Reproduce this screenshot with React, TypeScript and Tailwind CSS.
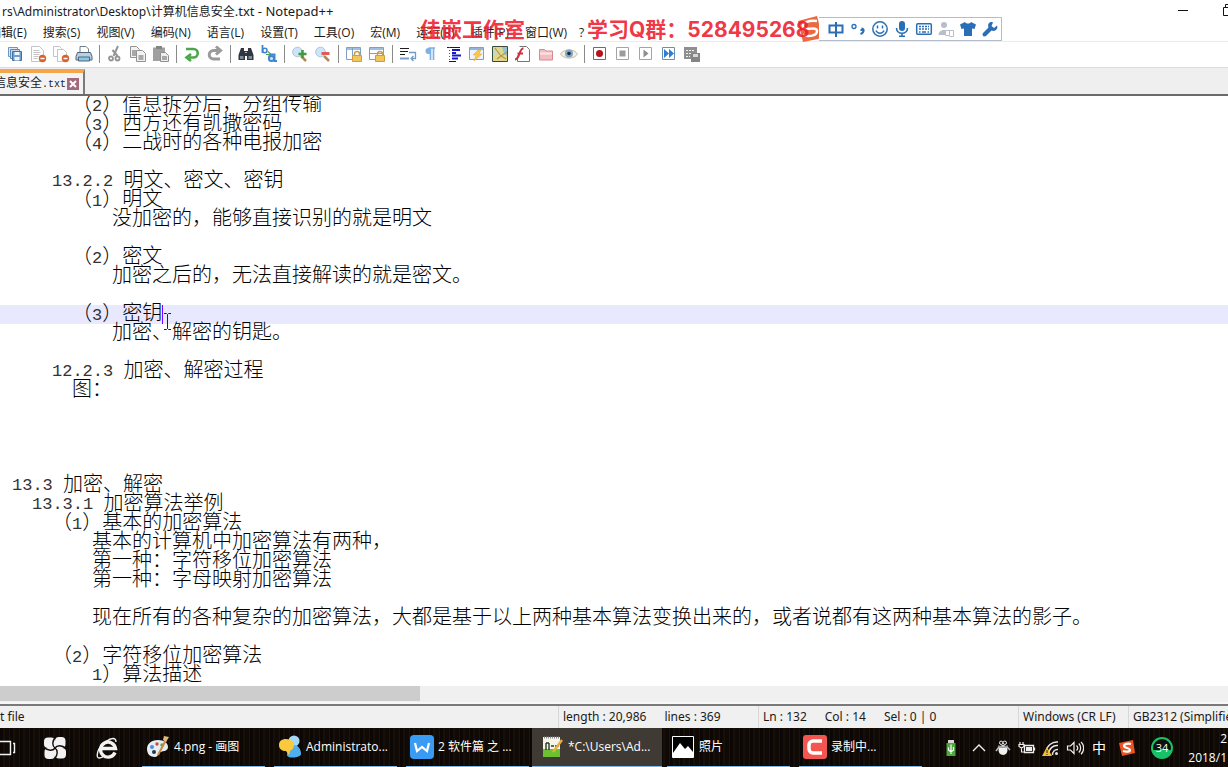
import type { ReactNode } from "react";

const uiFont = "font-['Noto_Sans','Noto_Sans_CJK_SC',sans-serif]";

type IconProps = { children: ReactNode; size?: number; box?: number };

function Icon({ children, size = 18, box = 18 }: Readonly<IconProps>) {
  return (
    <svg
      width={size}
      height={size}
      viewBox={`0 0 ${box} ${box}`}
      fill="none"
      aria-hidden="true"
      className="flex-none"
    >
      {children}
    </svg>
  );
}

/* ---------- toolbar icons ---------- */

const saveAll = (
  <>
    <path d="M2.500 2.500h9v9h-9z" fill="#dce9f5" stroke="#6d97c0" />
    <path d="M4.500 4.500h9v9h-9z" fill="#c3d8ec" stroke="#5b89b7" />
    <path d="M6.500 6.500h9v9h-9z" fill="#6f9fcd" stroke="#3f74a8" />
    <path d="M8.500 7h5v3h-5zM8.500 12h5v3.500h-5z" fill="#f1f6fb" />
  </>
);

const closeDoc = (
  <>
    <path d="M2.500 1.500h8l4 4v11h-12z" fill="#fff" stroke="#c4c4c4" />
    <path d="M4.500 5.500h6M4.500 7.500h7M4.500 9.500h6M4.500 11.500h5M4.500 13.500h4" stroke="#c4c4c4" />
    <circle cx="13.500" cy="13.500" r="3.700" fill="#d9622b" />
    <path d="M11.500 13.500h4" stroke="#fff" strokeWidth="1.500" />
  </>
);

const closeAll = (
  <>
    <path d="M1.500 1.500h6l2 2v8h-8z" fill="#fff" stroke="#c4c4c4" />
    <path d="M5.500 4.500h6l3 3v9h-9z" fill="#fff" stroke="#c4c4c4" />
    <circle cx="13.500" cy="13.500" r="3.700" fill="#d9622b" />
    <path d="M11.500 13.500h4" stroke="#fff" strokeWidth="1.500" />
  </>
);

const printer = (
  <>
    <path d="M5 8V1.500h6l2.500 2.500v4" fill="#fff" stroke="#6e7f90" />
    <path d="M2.500 7.500h13l1.500 4v3.500H1v-3.500z" fill="#b9cfe2" stroke="#4f6478" />
    <path d="M3.500 12h11v4h-11z" fill="#8ec6ea" stroke="#4f6478" />
  </>
);

const cut = (
  <>
    <path d="M12 1 7.500 11M6.500 5l5 6" stroke="#959595" strokeWidth="2" />
    <circle cx="5" cy="13.500" r="2" stroke="#959595" strokeWidth="1.800" />
    <circle cx="11.500" cy="13.500" r="2" stroke="#959595" strokeWidth="1.800" />
  </>
);

const copy = (
  <>
    <path d="M1.500 1.500h6l3 3v8h-9z" fill="#f2f2f2" stroke="#929292" />
    <path d="M3 5h4v6H3z" fill="#a8a8a8" />
    <path d="M7.500 5.500h6l3 3v8h-9z" fill="#f2f2f2" stroke="#929292" />
    <path d="M9.500 10h5v5h-5z" fill="#a8a8a8" />
  </>
);

const paste = (
  <>
    <path d="M1 2.500h12V16H1z" fill="#a0a0a0" />
    <path d="M4 1h6v3H4z" fill="#858585" />
    <path d="M8.500 7.500h5l3 3v6h-8z" fill="#efefef" stroke="#909090" />
    <path d="M10 11h5v4h-5z" fill="#a8a8a8" />
  </>
);

const undo = (
  <path
    d="M3 4h7.500a4 4 0 0 1 0 8.500H6M8 9l-4.500 3.500L8 16"
    stroke="#4aa84a"
    strokeWidth="2.600"
  />
);

const redo = (
  <path
    d="M14 14H7.500a4 4 0 0 1 0-8.500H12M10 1.500l4.500 4-4.500 4"
    stroke="#9a9a9a"
    strokeWidth="3"
  />
);

const find = (
  <>
    <path d="M4 3h3v3h4V3h3l2.500 7v5H10v-4H8v4H1.500v-5z" fill="#31373f" />
    <path d="M3 11h3.500v3H3zM11.500 11H15v3h-3.500z" fill="#7b8b9c" />
    <path d="M8 7.500h2" stroke="#aeb9c4" />
  </>
);

const replace = (
  <>
    <path d="M2.500 0v8" stroke="#3f86d1" strokeWidth="1.800" />
    <circle cx="4.800" cy="5.500" r="2.200" stroke="#3f86d1" strokeWidth="1.600" />
    <path d="M6 9.500h4M8 6.500l3 3-3 2" stroke="#55a055" strokeWidth="1.200" />
    <circle cx="11.500" cy="13.500" r="2.600" fill="#cfe3f7" stroke="#3f86d1" strokeWidth="2" />
    <path d="M10 9.500h4.500V16H17" stroke="#3f86d1" strokeWidth="2" />
  </>
);

const zoomIn = (
  <>
    <path d="m10 11 5 5" stroke="#b08a56" strokeWidth="2.500" />
    <circle cx="6.500" cy="7" r="4.800" fill="#cfe5f7" stroke="#a9c6de" />
    <path d="M11.500 5v8M7.500 9h8" stroke="#3f9a3c" strokeWidth="2.500" />
  </>
);

const zoomOut = (
  <>
    <path d="m10 11 5 5" stroke="#b08a56" strokeWidth="2.500" />
    <circle cx="6.500" cy="7" r="4.800" fill="#cfe5f7" stroke="#a9c6de" />
    <path d="M7.500 8.500h8" stroke="#e2514d" strokeWidth="2.800" />
  </>
);

const lock = (
  <>
    <path d="M9.500 11V9a2.500 2.500 0 0 1 5 0v2" stroke="#c9a04a" strokeWidth="1.500" />
    <path d="M7.500 10.500h9v6h-9z" fill="#f2c65a" stroke="#cf9d3b" />
  </>
);

const syncV = (
  <>
    <path d="M1.500 2.500h14v12h-14z" fill="#fff" stroke="#7f9fc5" />
    <path d="M2 3h13v2H2z" fill="#9ebfe2" />
    <path d="M7.500 3v11" stroke="#7f9fc5" />
    {lock}
  </>
);

const syncH = (
  <>
    <path d="M1.500 2.500h14v12h-14z" fill="#fff" stroke="#7f9fc5" />
    <path d="M2 3h13v2H2z" fill="#9ebfe2" />
    <path d="M2 8.500h13" stroke="#7f9fc5" />
    {lock}
  </>
);

const wrap = (
  <>
    <path d="M1 3.500h9M1 6.500h8M1 9.500h5" stroke="#1d1d1d" />
    <path d="M1 13.500h9" stroke="#7aa0c8" strokeWidth="2" />
    <path d="M10 7.500h6.500v6H13M14.500 11 12 13.500l2.500 2.500" stroke="#6f9cc9" strokeWidth="1.300" />
  </>
);

const pilcrow = (
  <>
    <path d="M8 3H6.500a3 3 0 0 0 0 6H8z" fill="#7fb2e2" />
    <path d="M8.500 2.500V15M11.500 2.500V15M6.500 3H13" stroke="#7fb2e2" strokeWidth="1.700" />
  </>
);

const indentGuide = (
  <>
    <path d="M2 2.500h13M4 16.500h7" stroke="#10107a" />
    <path d="M7 5h8M7 8h4M7 10.500h9M7 13.500h6" stroke="#1818c8" strokeWidth="2" />
    <path d="M4.500 2v14" stroke="#c03030" strokeDasharray="1 2" />
  </>
);

const userLang = (
  <>
    <path d="M1.500 2.500h14v12h-14z" fill="#eef4fb" stroke="#7f9fc5" />
    <path d="M2 3h13v2H2z" fill="#8fb6df" />
    <path d="m10 5-5 5h3l-2 6 8-7h-3l2-4z" fill="#f9c651" stroke="#e2a63c" strokeWidth=".5" />
  </>
);

const docMap = (
  <>
    <path d="M1.500 1.500h15v15h-15z" fill="#e2d68c" stroke="#3c4a3a" />
    <path d="M11 2h5v9l-3-2z" fill="#8fc3d8" />
    <path d="m2 2 5 5-3 4-2-2z" fill="#c3dcc0" />
    <path d="m4 3 6 8 6-4M6 14l4-3 5 3" stroke="#b09a4a" strokeWidth="1.200" />
  </>
);

const funcList = (
  <>
    <path d="M5.500 1.500h7l3 3v12h-12v-6" fill="#fff" stroke="#777" />
    <path d="M9.500 3.500C5 3 6 14.500 1 14.500M3.500 8.500H9" stroke="#cc3340" strokeWidth="2" />
  </>
);

const folderIcon = (
  <>
    <path d="M2.500 4.500h5l1.500 1.500h6.500v9h-13z" fill="#f3bec1" stroke="#d98a90" />
    <path d="M3 8.500h12" stroke="#fbe6e8" strokeWidth="2" />
  </>
);

const eye = (
  <>
    <path d="M.5 9C4 3.500 14 3.500 17.500 9 14 14.500 4 14.500.500 9z" fill="#f6efe2" stroke="#cbbb9c" />
    <circle cx="9" cy="8.500" r="4" fill="#7fa6c8" />
    <circle cx="9" cy="8.500" r="1.800" fill="#1b2b3c" />
  </>
);

const frame = (color: string) => (
  <path d="M2.500 2.500h12v12h-12z" fill="#fff" stroke={color} />
);

const record = (
  <>
    {frame("#6d6d6d")}
    <circle cx="8.500" cy="8.500" r="3.500" fill="#b5121b" />
  </>
);

const stop = (
  <>
    {frame("#a4a4a4")}
    <path d="M5.500 5.500h6v6h-6z" fill="#9b9b9b" />
  </>
);

const play = (
  <>
    {frame("#a4a4a4")}
    <path d="M6.500 4.500v8l5-4z" fill="#8d8d8d" />
  </>
);

const playMany = (
  <>
    {frame("#6f8db0")}
    <path d="M4 4v9l5-4.500zM9 4v9l5-4.500z" fill="#2f7fd0" />
  </>
);

const saveMacro = (
  <>
    <path d="M1 2h13v12H1z" fill="#8f8f8f" />
    <path d="M3 5.500h9M3 8.500h6M3 11.500h4" stroke="#f2f2f2" strokeDasharray="2 1" />
    <path d="M8 8h9v9H8z" fill="#858585" />
    <path d="M10 9h5v3h-5z" fill="#d8d8d8" />
  </>
);

type Tool = { label: string; icon: ReactNode };

const toolGroups: Tool[][] = [
  [
    { label: "全部保存", icon: saveAll },
    { label: "关闭", icon: closeDoc },
    { label: "全部关闭", icon: closeAll },
    { label: "打印", icon: printer },
  ],
  [
    { label: "剪切", icon: cut },
    { label: "复制", icon: copy },
    { label: "粘贴", icon: paste },
  ],
  [
    { label: "撤销", icon: undo },
    { label: "重做", icon: redo },
  ],
  [
    { label: "查找", icon: find },
    { label: "替换", icon: replace },
  ],
  [
    { label: "放大", icon: zoomIn },
    { label: "缩小", icon: zoomOut },
  ],
  [
    { label: "同步垂直滚动", icon: syncV },
    { label: "同步水平滚动", icon: syncH },
  ],
  [
    { label: "自动换行", icon: wrap },
    { label: "显示所有字符", icon: pilcrow },
    { label: "缩进参考线", icon: indentGuide },
    { label: "自定义语言", icon: userLang },
    { label: "文档结构图", icon: docMap },
    { label: "函数列表", icon: funcList },
    { label: "文件夹工作区", icon: folderIcon },
    { label: "监视", icon: eye },
  ],
  [
    { label: "录制宏", icon: record },
    { label: "停止录制", icon: stop },
    { label: "播放", icon: play },
    { label: "重复播放", icon: playMany },
    { label: "保存宏", icon: saveMacro },
  ],
];

function Toolbar() {
  return (
    <div className="flex h-[26px] flex-none items-start border-b border-[#dcdcdc] bg-white pl-[3px]">
      {toolGroups.map((group, index) => (
        <div key={group[0].label} className="flex items-center">
          {index > 0 && (
            <span className="flex w-2 justify-center">
              <span className="h-[18px] w-px bg-[#8a8a8a]" />
            </span>
          )}
          {group.map(({ label, icon }) => (
            <button
              key={label}
              type="button"
              aria-label={label}
              className="flex h-6 w-[23px] items-center justify-center"
            >
              <Icon>{icon}</Icon>
            </button>
          ))}
        </div>
      ))}
    </div>
  );
}

/* ---------- title and menu ---------- */

const menus = [
  "编辑(E)",
  "搜索(S)",
  "视图(V)",
  "编码(N)",
  "语言(L)",
  "设置(T)",
  "工具(O)",
  "宏(M)",
  "运行(R)",
  "插件(P)",
  "窗口(W)",
  "?",
];

function TitleBar() {
  return (
    <header className="flex h-6 flex-none items-center justify-between overflow-hidden">
      <h1 className="pl-0.5 text-xs whitespace-nowrap">
        rs\Administrator\Desktop\计算机信息安全
        <span className="text-[13px]">.txt - Notepad++</span>
      </h1>
      <div className="-mr-[7px] flex gap-[34px] pb-1">
        <button type="button" aria-label="最小化">
          <Icon size={12} box={12}>
            <path d="M1 6.500h10" stroke="#111" />
          </Icon>
        </button>
        <button type="button" aria-label="还原">
          <Icon size={12} box={12}>
            <path d="M.5 3.500h8v8h-8zM2.500 3V.500h9v8H9" stroke="#111" />
          </Icon>
        </button>
      </div>
    </header>
  );
}

function MenuBar() {
  return (
    <nav className="-ml-[19px] flex h-[18px] flex-none items-center border-b border-[#ececec] font-['Open_Sans','Noto_Sans_CJK_SC',sans-serif]">
      {menus.map((menu) => (
        <button
          key={menu}
          type="button"
          className="px-2 text-xs leading-4 whitespace-nowrap last:px-1"
        >
          {menu}
        </button>
      ))}
    </nav>
  );
}

function TabStrip() {
  return (
    <div className="flex h-7 flex-none items-end border-b-2 border-[#6b6b6b] bg-[#efefef]">
      <div className="flex h-[25px] w-[85px] items-center justify-end overflow-hidden border-t-4 border-r-2 border-t-[#f5a54a] border-r-[#7b7b7b] bg-[#f3f3f3] pr-1">
        <span className="font-['Liberation_Mono','Noto_Sans_CJK_SC',monospace] text-xs whitespace-nowrap">
          信息安全<span className="text-[10px]">.txt</span>
        </span>
        <button
          type="button"
          aria-label="关闭标签"
          className="ml-px flex size-3 flex-none items-center justify-center bg-[#a26a7f]"
        >
          <Icon size={8} box={8}>
            <path d="m1 1 6 6M7 1 1 7" stroke="#fff" strokeWidth="2" />
          </Icon>
        </button>
      </div>
    </div>
  );
}

/* ---------- editor ---------- */

type Line = { indent?: string; num?: string; text?: string; current?: boolean };

const lines: Line[] = [
  { indent: "pl-[72px]", text: "（2）信息拆分后，分组传输" },
  { indent: "pl-[72px]", text: "（3）西方还有凯撒密码" },
  { indent: "pl-[72px]", text: "（4）二战时的各种电报加密" },
  {},
  { indent: "pl-[52px]", num: "13.2.2 ", text: "明文、密文、密钥" },
  { indent: "pl-[72px]", text: "（1）明文" },
  { indent: "pl-[112px]", text: "没加密的，能够直接识别的就是明文" },
  {},
  { indent: "pl-[72px]", text: "（2）密文" },
  { indent: "pl-[112px]", text: "加密之后的，无法直接解读的就是密文。" },
  {},
  { indent: "pl-[72px]", text: "（3）密钥", current: true },
  { indent: "pl-[112px]", text: "加密、解密的钥匙。" },
  {},
  { indent: "pl-[52px]", num: "12.2.3 ", text: "加密、解密过程" },
  { indent: "pl-[72px]", text: "图：" },
  {},
  {},
  {},
  {},
  { indent: "pl-3", num: "13.3 ", text: "加密、解密" },
  { indent: "pl-8", num: "13.3.1 ", text: "加密算法举例" },
  { indent: "pl-[52px]", text: "（1）基本的加密算法" },
  { indent: "pl-[92px]", text: "基本的计算机中加密算法有两种，" },
  { indent: "pl-[92px]", text: "第一种：字符移位加密算法" },
  { indent: "pl-[92px]", text: "第一种：字母映射加密算法" },
  {},
  {
    indent: "pl-[92px]",
    text: "现在所有的各种复杂的加密算法，大都是基于以上两种基本算法变换出来的，或者说都有这两种基本算法的影子。",
  },
  {},
  { indent: "pl-[52px]", text: "（2）字符移位加密算法" },
  { indent: "pl-[92px]", num: "1", text: "）算法描述" },
];

// digits are set smaller so that two of them fill one full-width cell
function withSmallDigits(text: string) {
  return text.split(/(\d+)/).map((part, index) =>
    /^\d/.test(part) ? (
      <span key={index} className="text-[17px] text-[#333]">
        {part}
      </span>
    ) : (
      part
    ),
  );
}

function Editor() {
  return (
    <main
      role="textbox"
      aria-multiline="true"
      aria-label="计算机信息安全.txt"
      className="min-h-0 flex-1 overflow-hidden bg-white font-['Liberation_Mono','Noto_Sans_CJK_SC',monospace] text-xl leading-5 font-light text-black"
    >
      {lines.map(({ indent = "", num, text, current }, index) => (
        <div
          key={index}
          className={`flex h-[19px] whitespace-pre ${indent} ${current ? "bg-[#e8e8ff]" : ""}`}
        >
          {num && <span className="text-[17px] text-[#333]">{num}</span>}
          {text && <span>{withSmallDigits(text)}</span>}
          {current && (
            <span className="relative w-px bg-[#8000ff]">
              <span className="absolute top-2 left-0.5">
                <svg width="7" height="17" viewBox="0 0 7 17" aria-hidden="true">
                  <path
                    d="M0 .5h2.500l1 1 1-1H7M3.500 1.500v14M0 16.500h2.500l1-1 1 1H7"
                    fill="none"
                    stroke="#222"
                  />
                </svg>
              </span>
            </span>
          )}
        </div>
      ))}
    </main>
  );
}

function StatusBar() {
  return (
    <footer className="flex h-[22px] flex-none items-center bg-[#f0f0f0] text-xs whitespace-nowrap">
      <span className="min-w-0 flex-1">t file</span>
      <span className="flex h-full w-[200px] items-center gap-[18px] border-l border-[#d7d7d7] pl-1">
        <span>length : 20,986</span>
        <span>lines : 369</span>
      </span>
      <span className="flex h-full w-[260px] items-center gap-[18px] border-l border-[#d7d7d7] pl-1">
        <span>Ln : 132</span>
        <span>Col : 14</span>
        <span>Sel : 0 | 0</span>
      </span>
      <span className="flex h-full w-[110px] items-center border-l border-[#d7d7d7] pl-1">
        Windows (CR LF)
      </span>
      <span className="flex h-full w-[100px] items-center overflow-hidden border-l border-[#d7d7d7] pl-1">
        GB2312 (Simplified)
      </span>
    </footer>
  );
}

/* ---------- taskbar ---------- */

const paintIcon = (
  <>
    <path d="M12 5C5 5 1 9 1 14s3 8 8 8c4 0 2-4 5-5 4-1 8-1 8-5s-4-7-10-7z" fill="#e6eef4" />
    <circle cx="6" cy="12" r="2" fill="#4f8fd6" />
    <circle cx="11" cy="9" r="1.700" fill="#d34a3a" />
    <circle cx="16" cy="10" r="1.700" fill="#58a64a" />
    <circle cx="8" cy="17" r="2" fill="#27364a" />
    <path d="m12 20 8-15" stroke="#c58a45" strokeWidth="2" />
    <path d="m18 1 5 1-3 5-3-2z" fill="#e3b878" />
  </>
);

const chatIcon = (
  <>
    <circle cx="16" cy="6" r="5.500" fill="#a5d8f5" />
    <path d="M9 20c0-7 3-10 7-10s7 4 7 9c0 4-14 5-14 1z" fill="#4fb0ee" />
    <path d="M8 4c5 0 8 3 8 6s-2 5-4 6l-1 4-3-4c-4 0-7-2-7-6s3-6 7-6z" fill="#fbc93d" />
  </>
);

const wpsIcon = (
  <>
    <rect width="24" height="24" rx="4" fill="#3a9bf4" />
    <path d="m5 8 2 8 5-4 5 4 2-8" stroke="#fff" strokeWidth="2.200" />
  </>
);

const nppIcon = (
  <>
    <path d="M3 2h17v20H3z" fill="#f4f4ea" />
    <path d="M3 14h17v8H3z" fill="#6cc130" />
    <path d="M4 2.500h15" stroke="#8a8a8a" strokeWidth="2" strokeDasharray="1 1" />
    <path d="M6 8v7M9 8v7M6 8h3M11 11h3M15 11h4" stroke="#2c3b20" strokeWidth="1.400" />
    <path d="m13 17 9-12" stroke="#e7b03c" strokeWidth="2.500" />
  </>
);

const photosIcon = (
  <>
    <path d="M1.500 1.500h21v21h-21z" fill="#000" stroke="#fff" />
    <path d="m2 18 7-10 5 6 3-3 5 6v5H2z" fill="#fff" />
  </>
);

const camtasiaIcon = (
  <>
    <rect width="24" height="24" rx="3" fill="#f2564f" />
    <path d="M19 6H10a4 4 0 0 0-4 4v4a4 4 0 0 0 4 4h9" stroke="#fff" strokeWidth="3.500" />
  </>
);

const tasks = [
  { name: "4.png - 画图", icon: paintIcon },
  { name: "Administrato...", icon: chatIcon },
  { name: "2 软件篇 之 ...", icon: wpsIcon },
  { name: "*C:\\Users\\Ad...", icon: nppIcon, active: true },
  { name: "照片", icon: photosIcon },
  { name: "录制中...", icon: camtasiaIcon },
];

const tray = [
  {
    label: "USB",
    width: "w-8",
    icon: (
      <>
        <path d="M6 1h6v3H6z" fill="#d8d8d8" />
        <path d="M4.500 4h9v13h-9z" fill="#4ea83c" />
        <path d="M9 5.500V15M6.500 8.500v2.500L9 13l2.500-2V8" stroke="#fff" strokeWidth="1.200" />
      </>
    ),
  },
  {
    label: "显示隐藏的图标",
    width: "w-6",
    icon: <path d="m3 12 6-6 6 6" stroke="#eee" strokeWidth="1.400" />,
  },
  {
    label: "QQ",
    width: "w-6",
    icon: (
      <>
        <path d="M9 6c6 0 6 10 0 10S3 6 9 6z" fill="#f0f0f0" />
        <path d="m5 8-3 4M13 8l3 3" stroke="#bbb" strokeWidth="1.500" />
        <circle cx="7.200" cy="3.800" r="1.700" fill="#111" stroke="#eee" />
        <circle cx="10.800" cy="3.800" r="1.700" fill="#111" stroke="#eee" />
        <path d="M4 7c3 1.500 7 1.500 10 0" stroke="#999" strokeWidth="1.500" />
      </>
    ),
  },
  {
    label: "电源",
    width: "w-6",
    icon: (
      <>
        <path d="M6.500 6.500h9v7h-9zM16.500 8.500v3" stroke="#eee" strokeWidth="1.300" />
        <path d="M8 8h6v4H8z" fill="#eee" />
        <path d="M2 3v2M5 3v2M1 5.500h5v2L3.500 9 1 7.500zM3.500 9v4H6" stroke="#eee" strokeWidth="1.200" />
      </>
    ),
  },
  {
    label: "网络",
    width: "w-6",
    icon: (
      <>
        <path
          d="M4 13A11 11 0 0 1 16 3M7 15a8 8 0 0 1 9-8.500M10.500 16a5 5 0 0 1 5.500-5.500"
          stroke="#e8e8e8"
          strokeWidth="1.400"
        />
        <path d="m5 8 5 9H0z" fill="#f5bd32" />
        <path d="M5 11v3M5 15v1" stroke="#222" />
        <circle cx="14.500" cy="14.500" r="1.500" fill="#e8e8e8" />
      </>
    ),
  },
  {
    label: "音量",
    width: "w-6",
    icon: (
      <path
        d="M1.500 7h3L8 3.500v11L4.500 11h-3zM10.500 6.500c1.500 1.500 1.500 3.500 0 5M12.800 4.500c2.500 2.500 2.500 6.500 0 9M15 2.800c3.500 3.500 3.500 9 0 12.400"
        stroke="#eee"
        strokeWidth="1.200"
      />
    ),
  },
];

function Taskbar() {
  return (
    <div className="flex h-[39px] flex-none items-stretch bg-[#0f0a06] bg-[repeating-linear-gradient(90deg,#0c0704_0_3px,#171009_3px_5px,#0f0a06_5px_9px,#1b130c_9px_10px)] font-['Open_Sans','Noto_Sans_CJK_SC',sans-serif] text-xs text-white">
      <button type="button" aria-label="任务视图" className="-ml-0.5 flex w-[30px] items-center">
        <Icon>
          <path d="M0 2.500h12.500v13H0M15 4.500h1.500v9H15" stroke="#f2f2f2" strokeWidth="1.400" />
        </Icon>
      </button>
      <button type="button" aria-label="应用" className="flex w-[54px] items-center justify-center">
        <Icon size={24} box={24}>
          <g fill="#f2f2f2">
            <rect x="1" y="1.500" width="11" height="10.500" rx="4" />
            <rect x="12" y="1" width="10.500" height="11" rx="4" />
            <rect x="12" y="12" width="11" height="10.500" rx="4" />
            <rect x="1.500" y="12" width="10.500" height="11" rx="4" />
            <circle cx="12" cy="12" r="6" />
          </g>
          <path
            d="M12 12c-2 3-7 3-11-.5M12 12c-3-2-3-7 .5-11M12 12c2-3 7-3 11 .5M12 12c3 2 3 7-.5 11"
            stroke="#120c08"
            strokeWidth="1.400"
          />
        </Icon>
      </button>
      <button
        type="button"
        aria-label="Internet Explorer"
        className="mr-2 flex w-[52px] items-center justify-center"
      >
        <Icon size={24} box={24}>
          <path
            d="M19 16.500A7.500 7.500 0 1 1 19.500 12.500H6"
            stroke="#f2f2f2"
            strokeWidth="3.400"
          />
          <path
            d="M20 6c0-5-5-4-10-.5C3 9.500.500 17 1.500 21c1 2 4 1 7-1.500"
            stroke="#f2f2f2"
            strokeWidth="1.400"
          />
        </Icon>
      </button>

      <div className="flex">
        {tasks.map(({ name, icon, active }) => (
          <button
            key={name}
            type="button"
            className={`flex items-center gap-1 overflow-hidden border-b border-[#76b9ed] whitespace-nowrap ${
              active
                ? "mr-[5px] -ml-1.5 w-[130px] bg-[#3f3a33] pl-2"
                : "mr-[9px] w-[123px] pl-1"
            }`}
          >
            <Icon size={24} box={24}>
              {icon}
            </Icon>
            <span>{name}</span>
          </button>
        ))}
      </div>

      <div className="ml-auto flex items-center">
        {tray.map(({ label, width, icon }) => (
          <button
            key={label}
            type="button"
            aria-label={label}
            className={`flex justify-center ${width}`}
          >
            <Icon>{icon}</Icon>
          </button>
        ))}
        <button type="button" className="w-6 text-center text-sm">
          中
        </button>
        <button type="button" aria-label="搜狗输入法" className="flex w-8 justify-center">
          <Icon>
            <path d="m1 4 14-3 2 13-13 3z" fill="#ea5423" />
            <path d="M13 5c-3-1-7 0-7 2s6 2 6 4-4 2-7 1" stroke="#fff" strokeWidth="2.200" />
          </Icon>
        </button>
        <button
          type="button"
          className="mx-2 size-[22px] rounded-full border-2 border-[#18c267] bg-[linear-gradient(#101010_60%,#18c267_60%)] text-center text-[11px] leading-[18px]"
        >
          34
        </button>
        <div className="flex h-full w-[47px] flex-col items-end justify-center pr-px leading-[19px]">
          <time>2</time>
          <time>2018/1</time>
        </div>
      </div>
    </div>
  );
}

/* ---------- floating overlays ---------- */

const blue = "#2a6fb5";

const imeItems = [
  {
    label: "中文",
    icon: (
      <path d="M2.500 5.500h13v7h-13zM9 2v15" stroke={blue} strokeWidth="2" />
    ),
  },
  {
    label: "标点",
    icon: (
      <>
        <circle cx="5" cy="6.500" r="2" stroke={blue} strokeWidth="1.300" />
        <path d="M12.500 8.500c3 0 3 4-1 5.500M11.500 10h2" stroke={blue} strokeWidth="2" />
      </>
    ),
  },
  {
    label: "表情",
    icon: (
      <>
        <circle cx="9" cy="9" r="7.200" stroke={blue} strokeWidth="1.500" />
        <path d="M6.500 5.500v3M11.500 5.500v3M5 10.500c1.500 3.500 6.500 3.500 8 0" stroke={blue} strokeWidth="1.500" />
      </>
    ),
  },
  {
    label: "语音",
    icon: (
      <>
        <rect x="6" y="1" width="6" height="10" rx="3" fill={blue} />
        <path d="M3.500 8c0 7 11 7 11 0M9 13v3M6 16.200h6" stroke={blue} strokeWidth="1.600" />
      </>
    ),
  },
  {
    label: "软键盘",
    icon: (
      <>
        <rect x="1.700" y="3.700" width="14.600" height="10.600" rx="1" stroke={blue} strokeWidth="1.500" />
        <path d="M4 6.500h10M4 9h10" stroke={blue} strokeWidth="1.600" strokeDasharray="2 1" />
        <path d="M4 12h1.500M7 12h4M12.500 12H14" stroke={blue} strokeWidth="1.600" />
      </>
    ),
  },
  {
    label: "登录",
    icon: (
      <>
        <circle cx="7" cy="5" r="3" fill="#b9bccb" />
        <path d="M1.500 15c0-6 10-7 10-1v1z" fill="#b9bccb" />
        <path d="M8.500 10.500h4v5h-4zM12.500 10.500h4v6h-4" fill="#fff" stroke="#b9bccb" />
      </>
    ),
  },
  {
    label: "皮肤",
    icon: (
      <path d="M6 2c1 2 5 2 6 0l5 2.500L15.500 9 13 8.500V16H5V8.500L2.500 9 1 4.500z" fill={blue} />
    ),
  },
  {
    label: "工具箱",
    icon: (
      <path
        d="M16 5.500 13 8l-2.500-2L12 2.500C9 1 6 4 7.500 7.500L2 13c-1.500 2 1 4.500 3 3l5.500-5.500C14 12 17.500 9 16 5.500z"
        fill={blue}
      />
    ),
  },
];

function ImeBar() {
  return (
    <div className="absolute top-[17px] left-[797px] flex items-center">
      <svg width="26" height="28" viewBox="0 0 26 28" aria-hidden="true" className="-my-1">
        <path d="M1 6 20 1l5 19c0 2-2 3-4 4L6 27z" fill="#e8592b" fillOpacity=".9" />
        <path
          d="M20 6C12 5 4 8 6 12s14-1 14 4-8 6-14 4"
          fill="none"
          stroke="#fff"
          strokeWidth="2.500"
        />
      </svg>
      <div className="-ml-1 flex h-6 items-center border border-l-0 border-[#b4bccb] bg-white pl-1.5">
        {imeItems.map(({ label, icon }) => (
          <button
            key={label}
            type="button"
            aria-label={label}
            className="flex w-[22px] justify-center"
          >
            <Icon>{icon}</Icon>
          </button>
        ))}
      </div>
    </div>
  );
}

function Watermark() {
  return (
    <p className="pointer-events-none absolute top-[15px] left-[420px] flex gap-[62px] font-['Inter','Noto_Sans_CJK_SC',sans-serif] text-[21px] leading-[30px] font-bold whitespace-nowrap text-[#ee1c2e]/90">
      <span>佳嵌工作室</span>
      <span>学习Q群：528495268</span>
    </p>
  );
}

export default function App() {
  return (
    <div
      className={`relative flex h-screen flex-col overflow-hidden bg-white text-[#1a1a1a] ${uiFont}`}
    >
      <TitleBar />
      <MenuBar />
      <Toolbar />
      <TabStrip />
      <Editor />
      <div className="h-4 flex-none bg-[#f0f0f0]">
        <div className="h-[15px] w-[420px] bg-[#cdcdcd]" />
      </div>
      <div className="h-1 flex-none border-b-2 border-[#7a7a7a] bg-[#f7f7f7]" />
      <StatusBar />
      <Taskbar />
      <ImeBar />
      <Watermark />
    </div>
  );
}
